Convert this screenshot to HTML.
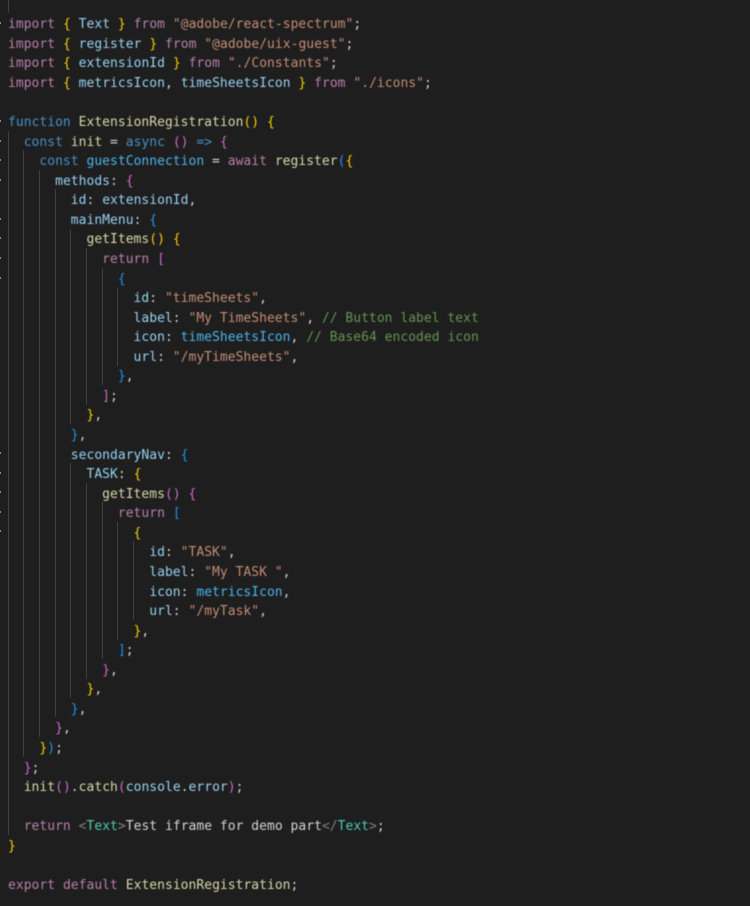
<!DOCTYPE html>
<html lang="en">
<head>
<meta charset="utf-8">
<title>ExtensionRegistration</title>
<style>
html,body{margin:0;padding:0;background:#1e1e1e;}
#w{position:relative;width:750px;height:906px;overflow:hidden;background:#1e1e1e;}
#c{position:absolute;left:8px;top:15.2px;margin:0;font-family:"DejaVu Sans Mono","Liberation Mono",monospace;font-size:13px;letter-spacing:.02px;line-height:19.57px;color:#d4d4d4;white-space:pre;filter:blur(.45px);}
.g{position:absolute;width:1px;background:#404040;}
.t{position:absolute;left:0;width:1px;height:2px;background:#8a8a8a;}
.k{color:#b980ae}.b{color:#4a8fc6}.v{color:#96d2f2}.n{color:#4ab4ec}.f{color:#d8d8a8}.s{color:#c48d74}.m{color:#669353}.y{color:#f5cf0a}.p{color:#cf6bcb}.l{color:#1a96ee}.h{color:#4ec9b0}.a{color:#808080}.x{color:#d4d4d4}
</style>
</head>
<body>
<div id="w">
<div class="g" style="left:8px;top:0;height:13px"></div>
<div class="g" style="left:8px;top:131px;height:704px"></div>
<div class="g" style="left:23px;top:150px;height:607px"></div>
<div class="g" style="left:39px;top:170px;height:567px"></div>
<div class="g" style="left:55px;top:189px;height:528px"></div>
<div class="g" style="left:70px;top:229px;height:195px"></div>
<div class="g" style="left:70px;top:463px;height:235px"></div>
<div class="g" style="left:86px;top:248px;height:157px"></div>
<div class="g" style="left:86px;top:483px;height:196px"></div>
<div class="g" style="left:102px;top:268px;height:117px"></div>
<div class="g" style="left:102px;top:502px;height:157px"></div>
<div class="g" style="left:117px;top:287px;height:79px"></div>
<div class="g" style="left:117px;top:522px;height:118px"></div>
<div class="g" style="left:133px;top:541px;height:79px"></div>
<div class="t" style="top:22px"></div>
<div class="t" style="top:120px"></div>
<div class="t" style="top:140px"></div>
<div class="t" style="top:159px"></div>
<div class="t" style="top:179px"></div>
<div class="t" style="top:218px"></div>
<div class="t" style="top:237px"></div>
<div class="t" style="top:257px"></div>
<div class="t" style="top:277px"></div>
<div class="t" style="top:452px"></div>
<div class="t" style="top:472px"></div>
<div class="t" style="top:491px"></div>
<div class="t" style="top:511px"></div>
<div class="t" style="top:530px"></div>
<pre id="c"><span class="k">import</span> <span class="y">{</span> <span class="v">Text</span> <span class="y">}</span> <span class="k">from</span> <span class="s">"@adobe/react-spectrum"</span>;
<span class="k">import</span> <span class="y">{</span> <span class="v">register</span> <span class="y">}</span> <span class="k">from</span> <span class="s">"@adobe/uix-guest"</span>;
<span class="k">import</span> <span class="y">{</span> <span class="v">extensionId</span> <span class="y">}</span> <span class="k">from</span> <span class="s">"./Constants"</span>;
<span class="k">import</span> <span class="y">{</span> <span class="v">metricsIcon</span>, <span class="v">timeSheetsIcon</span> <span class="y">}</span> <span class="k">from</span> <span class="s">"./icons"</span>;

<span class="b">function</span> <span class="f">ExtensionRegistration</span><span class="y">()</span> <span class="y">{</span>
  <span class="b">const</span> <span class="f">init</span> = <span class="b">async</span> <span class="p">()</span> <span class="b">=&gt;</span> <span class="p">{</span>
    <span class="b">const</span> <span class="n">guestConnection</span> = <span class="k">await</span> <span class="f">register</span><span class="l">(</span><span class="y">{</span>
      <span class="v">methods</span>: <span class="p">{</span>
        <span class="v">id</span>: <span class="v">extensionId</span>,
        <span class="v">mainMenu</span>: <span class="l">{</span>
          <span class="f">getItems</span><span class="y">()</span> <span class="y">{</span>
            <span class="k">return</span> <span class="p">[</span>
              <span class="l">{</span>
                <span class="v">id</span>: <span class="s">"timeSheets"</span>,
                <span class="v">label</span>: <span class="s">"My TimeSheets"</span>, <span class="m">// Button label text</span>
                <span class="v">icon</span>: <span class="n">timeSheetsIcon</span>, <span class="m">// Base64 encoded icon</span>
                <span class="v">url</span>: <span class="s">"/myTimeSheets"</span>,
              <span class="l">}</span>,
            <span class="p">]</span>;
          <span class="y">}</span>,
        <span class="l">}</span>,
        <span class="v">secondaryNav</span>: <span class="l">{</span>
          <span class="v">TASK</span>: <span class="y">{</span>
            <span class="f">getItems</span><span class="p">()</span> <span class="p">{</span>
              <span class="k">return</span> <span class="l">[</span>
                <span class="y">{</span>
                  <span class="v">id</span>: <span class="s">"TASK"</span>,
                  <span class="v">label</span>: <span class="s">"My TASK "</span>,
                  <span class="v">icon</span>: <span class="n">metricsIcon</span>,
                  <span class="v">url</span>: <span class="s">"/myTask"</span>,
                <span class="y">}</span>,
              <span class="l">]</span>;
            <span class="p">}</span>,
          <span class="y">}</span>,
        <span class="l">}</span>,
      <span class="p">}</span>,
    <span class="y">}</span><span class="l">)</span>;
  <span class="p">}</span>;
  <span class="f">init</span><span class="p">()</span>.<span class="f">catch</span><span class="p">(</span><span class="v">console</span>.<span class="v">error</span><span class="p">)</span>;

  <span class="k">return</span> <span class="a">&lt;</span><span class="h">Text</span><span class="a">&gt;</span>Test iframe for demo part<span class="a">&lt;/</span><span class="h">Text</span><span class="a">&gt;</span>;
<span class="y">}</span>

<span class="k">export</span> <span class="k">default</span> <span class="f">ExtensionRegistration</span>;</pre>
</div>
</body>
</html>
